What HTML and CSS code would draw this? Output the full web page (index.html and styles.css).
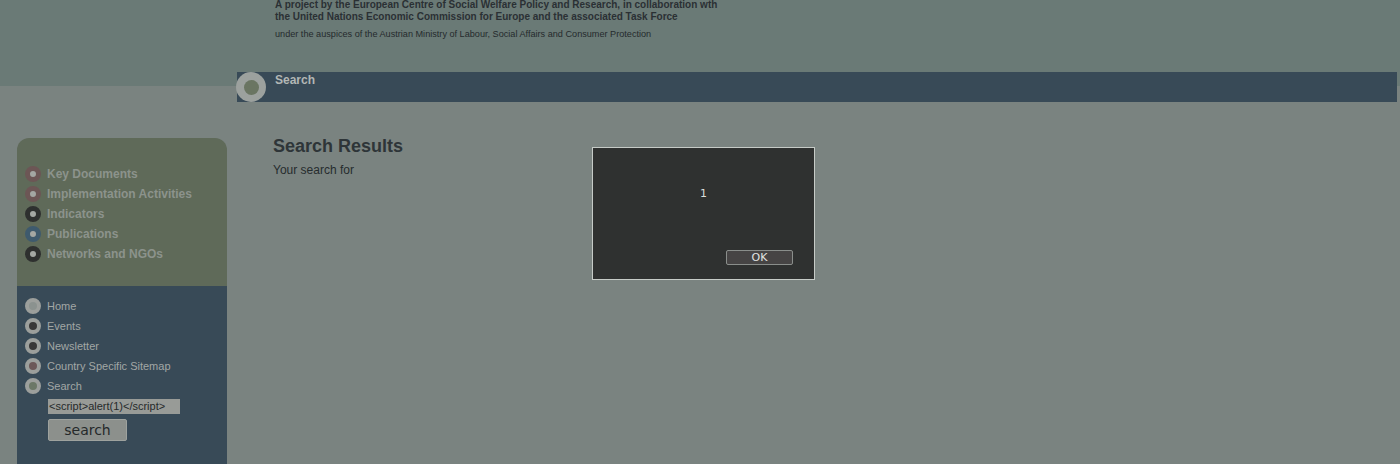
FILE: index.html
```html
<!DOCTYPE html>
<html>
<head>
<meta charset="utf-8">
<link rel="stylesheet" href="styles.css">
</head>
<body>
<div class="header">
  <div class="project">A project by the European Centre of Social Welfare Policy and Research, in collaboration wth<br>the United Nations Economic Commission for Europe and the associated Task Force</div>
  <div class="auspices">under the auspices of the Austrian Ministry of Labour, Social Affairs and Consumer Protection</div>
</div>
<div class="navrow">
  <div class="navbar">
    <span class="nav-knob"><span class="nav-knob-in"></span></span>
    <span class="nav-title">Search</span>
  </div>
</div>
<div class="layout">
  <div class="sidebar">
    <ul class="topics">
      <li><span class="bul b-red"></span>Key Documents</li>
      <li><span class="bul b-red"></span>Implementation Activities</li>
      <li><span class="bul b-dark"></span>Indicators</li>
      <li><span class="bul b-blue"></span>Publications</li>
      <li><span class="bul b-dark"></span>Networks and NGOs</li>
    </ul>
    <div class="service">
      <ul class="links">
        <li><span class="dot d-home"></span>Home</li>
        <li><span class="dot d-dark"></span>Events</li>
        <li><span class="dot d-dark"></span>Newsletter</li>
        <li><span class="dot d-red"></span>Country Specific Sitemap</li>
        <li><span class="dot d-green"></span>Search</li>
      </ul>
      <div class="search-input">&lt;script&gt;alert(1)&lt;/script&gt;</div>
      <div class="search-btn">search</div>
    </div>
  </div>
  <div class="main">
    <h1 class="title">Search Results</h1>
    <p class="lead">Your search for</p>
  </div>
</div>
<div class="dialog">
  <div class="dialog-msg">1</div>
  <div class="dialog-actions"><span class="ok-btn">OK</span></div>
</div>
</body>
</html>
```
FILE: styles.css
```css
html, body {
  margin: 0;
  padding: 0;
}
body {
  width: 1400px;
  height: 464px;
  overflow: hidden;
  position: relative;
  background: linear-gradient(#6a7a76 0, #6a7a76 86px, #7a8380 86px, #7a8380 100%);
  font-family: "Liberation Sans", Arial, sans-serif;
}
.header {
  display: flow-root;
  height: 72px;
  box-sizing: border-box;
  padding-left: 275px;
}
.project {
  font-size: 10px;
  font-weight: bold;
  line-height: 12px;
  color: #2a3034;
  margin-top: -1px;
}
.auspices {
  font-size: 9.15px;
  line-height: 11px;
  margin-top: 6px;
  color: #252a2d;
}
.navrow {
  height: 30px;
  padding-right: 3px;
}
.navbar {
  position: relative;
  margin-left: 237px;
  height: 30px;
  background: #384a57;
  padding-left: 38px;
  box-sizing: border-box;
}
.nav-knob {
  position: absolute;
  left: -1px;
  top: 0;
  width: 30px;
  height: 30px;
  border-radius: 50%;
  background: #9ca19e;
  display: flex;
  align-items: center;
  justify-content: center;
}
.nav-knob-in {
  width: 15px;
  height: 15px;
  border-radius: 50%;
  background: #6a7562;
}
.nav-title {
  display: block;
  padding-top: 2px;
  font-size: 12px;
  line-height: 12px;
  font-weight: bold;
  color: #b2b7b5;
}
.layout {
  display: flex;
  align-items: flex-start;
  margin-top: 36px;
}
.sidebar {
  margin-left: 17px;
  width: 210px;
}
ul {
  list-style: none;
  margin: 0;
  padding: 0;
}
.topics {
  background: #5f6a59;
  border-radius: 12px 12px 0 0;
  height: 148px;
  box-sizing: border-box;
  padding: 26px 0 0 8px;
}
.topics li {
  height: 20px;
  display: flex;
  align-items: center;
  gap: 6px;
  font-size: 12px;
  font-weight: bold;
  color: #8c938c;
}
.bul {
  width: 6px;
  height: 6px;
  border-radius: 50%;
  border: 5px solid #2f3131;
  background: #a4a7a3;
  flex: none;
}
.b-red { border-color: #6c5655; }
.b-dark { border-color: #2e302f; }
.b-blue { border-color: #3e5a6d; }
.service {
  background: #384a57;
  height: 190px;
  padding: 10px 0 0 8px;
  box-sizing: border-box;
}
.links li {
  height: 20px;
  display: flex;
  align-items: center;
  gap: 6px;
  font-size: 11px;
  color: #a2a7a5;
}
.dot {
  width: 8px;
  height: 8px;
  border-radius: 50%;
  border: 4px solid #9c9f9c;
  background: #3a3a3a;
  flex: none;
}
.d-home { background: #8b928f; }
.d-dark { background: #393838; }
.d-red { background: #6c5858; }
.d-green { background: #6c7867; }
.search-input {
  margin: 3px 0 0 23px;
  width: 132px;
  height: 15px;
  box-sizing: border-box;
  background: #989b97;
  padding-left: 1px;
  font-size: 11px;
  line-height: 15px;
  color: #262a2b;
  white-space: nowrap;
  overflow: hidden;
}
.search-btn {
  margin: 5px 0 0 23px;
  width: 79px;
  height: 22px;
  box-sizing: border-box;
  background: #8c908c;
  border: 1px solid #9ea29e;
  border-radius: 2px;
  font-family: "DejaVu Sans", sans-serif;
  font-size: 14px;
  line-height: 20px;
  text-align: center;
  color: #25292a;
}
.main {
  margin-left: 46px;
  margin-top: -2px;
}
.title {
  margin: 0;
  font-size: 18px;
  line-height: 20px;
  font-weight: bold;
  color: #2e3538;
}
.lead {
  margin: 7px 0 0;
  font-size: 12px;
  line-height: 14px;
  color: #262c2e;
}
.dialog {
  position: absolute;
  left: 592px;
  top: 147px;
  width: 223px;
  height: 133px;
  box-sizing: border-box;
  border: 1px solid #c6cbc7;
  background: #2f3130;
  font-family: "DejaVu Sans", sans-serif;
}
.dialog-msg {
  margin-top: 39px;
  padding-left: 107px;
  font-size: 11px;
  line-height: 14px;
  color: #dadedb;
}
.dialog-actions {
  margin-top: 49px;
  padding-left: 133px;
}
.ok-btn {
  display: block;
  width: 67px;
  height: 15px;
  box-sizing: border-box;
  border: 1px solid #8a8e8b;
  border-radius: 2px;
  background: #464444;
  font-size: 11px;
  line-height: 13px;
  text-align: center;
  color: #e2e4e2;
}
```
